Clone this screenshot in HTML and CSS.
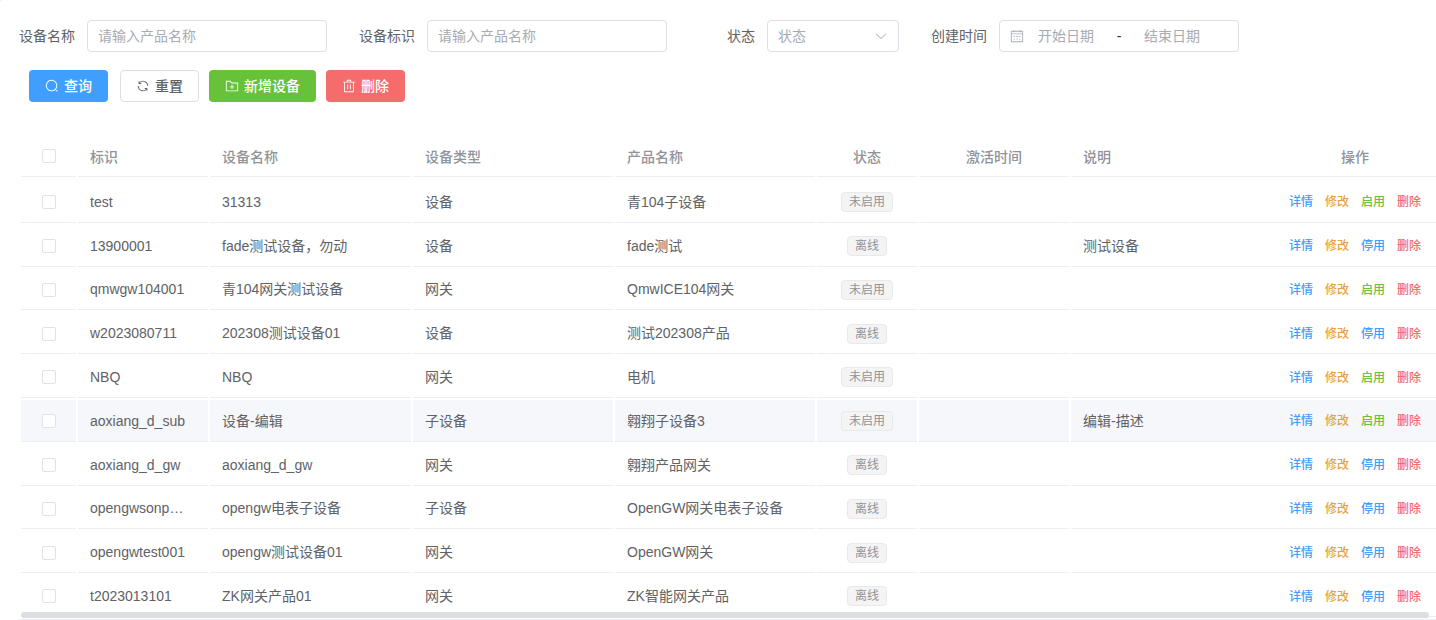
FILE: index.html
```html
<!DOCTYPE html>
<html lang="zh-CN">
<head>
<meta charset="utf-8">
<title>设备管理</title>
<link rel="stylesheet" href="styles.css">
</head>
<body>
<main class="card">
  <form class="filters">
    <div class="field">
      <label class="field-label" for="name">设备名称</label>
      <input class="text-input" id="name" type="text" placeholder="请输入产品名称">
    </div>
    <div class="field">
      <label class="field-label" for="code">设备标识</label>
      <input class="text-input" id="code" type="text" placeholder="请输入产品名称">
    </div>
    <div class="field">
      <label class="field-label" for="state">状态</label>
      <div class="select-box">
        <select class="select-input" id="state"><option>状态</option></select>
        <svg class="icon select-arrow" viewBox="0 0 1024 1024"><path d="M831.872 340.864 512 652.672 192.128 340.864a30.592 30.592 0 0 0-42.752 0 29.12 29.12 0 0 0 0 41.6L489.664 714.24a32 32 0 0 0 44.672 0l340.288-331.712a29.12 29.12 0 0 0 0-41.728 30.592 30.592 0 0 0-42.752 0z"/></svg>
      </div>
    </div>
    <div class="field">
      <label class="field-label field-label-auto" for="start">创建时间</label>
      <div class="date-range">
        <svg class="icon" viewBox="0 0 1024 1024"><path d="M128 384v512h768V192H768v32a32 32 0 1 1-64 0v-32H320v32a32 32 0 0 1-64 0v-32H128v128h768v64H128zm192-256h384V96a32 32 0 1 1 64 0v32h160a32 32 0 0 1 32 32v768a32 32 0 0 1-32 32H96a32 32 0 0 1-32-32V160a32 32 0 0 1 32-32h160V96a32 32 0 0 1 64 0v32zm-32 384h64a32 32 0 0 1 0 64h-64a32 32 0 0 1 0-64zm0 192h64a32 32 0 1 1 0 64h-64a32 32 0 1 1 0-64zm192-192h64a32 32 0 0 1 0 64h-64a32 32 0 0 1 0-64zm0 192h64a32 32 0 1 1 0 64h-64a32 32 0 1 1 0-64zm192-192h64a32 32 0 1 1 0 64h-64a32 32 0 1 1 0-64zm0 192h64a32 32 0 1 1 0 64h-64a32 32 0 1 1 0-64z"/></svg>
        <input class="date-input" id="start" type="text" placeholder="开始日期">
        <span class="date-separator">-</span>
        <input class="date-input" type="text" placeholder="结束日期" aria-label="结束日期">
      </div>
    </div>
  </form>

  <div class="toolbar">
    <button class="btn btn-primary" type="button"><svg class="icon" viewBox="0 0 1024 1024"><path d="m795.904 750.72 124.992 124.928a32 32 0 0 1-45.248 45.248L750.656 795.904a416 416 0 1 1 45.248-45.248zM480 832a352 352 0 1 0 0-704 352 352 0 0 0 0 704z"/></svg>查询</button>
    <button class="btn btn-plain" type="button"><svg class="icon" viewBox="0 0 1024 1024"><path d="M771.776 794.88A384 384 0 0 1 128 512h64a320 320 0 0 0 555.712 216.448H654.72a32 32 0 1 1 0-64h149.056a32 32 0 0 1 32 32v148.928a32 32 0 1 1-64 0v-50.56zM276.288 295.616h92.992a32 32 0 0 1 0 64H220.16a32 32 0 0 1-32-32V178.56a32 32 0 0 1 64 0v50.56A384 384 0 0 1 896.128 512h-64a320 320 0 0 0-555.776-216.384z"/></svg>重置</button>
    <button class="btn btn-success" type="button"><svg class="icon" viewBox="0 0 1024 1024"><path d="M128 192v640h768V320H485.76L357.504 192H128zm-32-64h287.872l128.384 128H928a32 32 0 0 1 32 32v576a32 32 0 0 1-32 32H96a32 32 0 0 1-32-32V160a32 32 0 0 1 32-32zm384 416V416h64v128h128v64H544v128h-64V608H352v-64h128z"/></svg>新增设备</button>
    <button class="btn btn-danger" type="button"><svg class="icon" viewBox="0 0 1024 1024"><path d="M160 256H96a32 32 0 0 1 0-64h256V95.936a32 32 0 0 1 32-32h256a32 32 0 0 1 32 32V192h256a32 32 0 1 1 0 64h-64v672a32 32 0 0 1-32 32H192a32 32 0 0 1-32-32V256zm448-64v-64H416v64h192zM224 896h576V256H224v640zm192-128a32 32 0 0 1-32-32V416a32 32 0 0 1 64 0v320a32 32 0 0 1-32 32zm192 0a32 32 0 0 1-32-32V416a32 32 0 0 1 64 0v320a32 32 0 0 1-32 32z"/></svg>删除</button>
  </div>

  <div class="table-area">
    <table class="devices">
      <colgroup>
        <col class="col-check"><col class="col-code"><col class="col-name"><col class="col-type"><col class="col-product"><col class="col-state"><col class="col-time"><col><col class="col-actions">
      </colgroup>
      <thead>
        <tr>
          <th class="control-cell"><input class="check" type="checkbox" aria-label="全选"></th>
          <th>标识</th><th>设备名称</th><th>设备类型</th><th>产品名称</th>
          <th class="center">状态</th><th class="center">激活时间</th><th>说明</th><th class="center actions-cell">操作</th>
        </tr>
      </thead>
      <tbody>
        <tr>
          <td class="control-cell"><input class="check" type="checkbox" aria-label="选择 test"></td>
          <td>test</td><td>31313</td><td>设备</td><td>青104子设备</td>
          <td class="control-cell"><span class="tag">未启用</span></td><td></td><td></td>
          <td class="actions-cell"><div class="actions"><button class="link blue">详情</button><button class="link orange">修改</button><button class="link green">启用</button><button class="link red">删除</button></div></td>
        </tr>
        <tr>
          <td class="control-cell"><input class="check" type="checkbox" aria-label="选择 13900001"></td>
          <td>13900001</td><td>fade测试设备，勿动</td><td>设备</td><td>fade测试</td>
          <td class="control-cell"><span class="tag">离线</span></td><td></td><td>测试设备</td>
          <td class="actions-cell"><div class="actions"><button class="link blue">详情</button><button class="link orange">修改</button><button class="link blue">停用</button><button class="link red">删除</button></div></td>
        </tr>
        <tr>
          <td class="control-cell"><input class="check" type="checkbox" aria-label="选择 qmwgw104001"></td>
          <td>qmwgw104001</td><td>青104网关测试设备</td><td>网关</td><td>QmwICE104网关</td>
          <td class="control-cell"><span class="tag">未启用</span></td><td></td><td></td>
          <td class="actions-cell"><div class="actions"><button class="link blue">详情</button><button class="link orange">修改</button><button class="link green">启用</button><button class="link red">删除</button></div></td>
        </tr>
        <tr>
          <td class="control-cell"><input class="check" type="checkbox" aria-label="选择 w2023080711"></td>
          <td>w2023080711</td><td>202308测试设备01</td><td>设备</td><td>测试202308产品</td>
          <td class="control-cell"><span class="tag">离线</span></td><td></td><td></td>
          <td class="actions-cell"><div class="actions"><button class="link blue">详情</button><button class="link orange">修改</button><button class="link blue">停用</button><button class="link red">删除</button></div></td>
        </tr>
        <tr>
          <td class="control-cell"><input class="check" type="checkbox" aria-label="选择 NBQ"></td>
          <td>NBQ</td><td>NBQ</td><td>网关</td><td>电机</td>
          <td class="control-cell"><span class="tag">未启用</span></td><td></td><td></td>
          <td class="actions-cell"><div class="actions"><button class="link blue">详情</button><button class="link orange">修改</button><button class="link green">启用</button><button class="link red">删除</button></div></td>
        </tr>
        <tr class="is-active">
          <td class="control-cell"><input class="check" type="checkbox" aria-label="选择 aoxiang_d_sub"></td>
          <td>aoxiang_d_sub</td><td>设备-编辑</td><td>子设备</td><td>翱翔子设备3</td>
          <td class="control-cell"><span class="tag">未启用</span></td><td></td><td>编辑-描述</td>
          <td class="actions-cell"><div class="actions"><button class="link blue">详情</button><button class="link orange">修改</button><button class="link green">启用</button><button class="link red">删除</button></div></td>
        </tr>
        <tr>
          <td class="control-cell"><input class="check" type="checkbox" aria-label="选择 aoxiang_d_gw"></td>
          <td>aoxiang_d_gw</td><td>aoxiang_d_gw</td><td>网关</td><td>翱翔产品网关</td>
          <td class="control-cell"><span class="tag">离线</span></td><td></td><td></td>
          <td class="actions-cell"><div class="actions"><button class="link blue">详情</button><button class="link orange">修改</button><button class="link blue">停用</button><button class="link red">删除</button></div></td>
        </tr>
        <tr>
          <td class="control-cell"><input class="check" type="checkbox" aria-label="选择 opengwsonp…"></td>
          <td>opengwsonp…</td><td>opengw电表子设备</td><td>子设备</td><td>OpenGW网关电表子设备</td>
          <td class="control-cell"><span class="tag">离线</span></td><td></td><td></td>
          <td class="actions-cell"><div class="actions"><button class="link blue">详情</button><button class="link orange">修改</button><button class="link blue">停用</button><button class="link red">删除</button></div></td>
        </tr>
        <tr>
          <td class="control-cell"><input class="check" type="checkbox" aria-label="选择 opengwtest001"></td>
          <td>opengwtest001</td><td>opengw测试设备01</td><td>网关</td><td>OpenGW网关</td>
          <td class="control-cell"><span class="tag">离线</span></td><td></td><td></td>
          <td class="actions-cell"><div class="actions"><button class="link blue">详情</button><button class="link orange">修改</button><button class="link blue">停用</button><button class="link red">删除</button></div></td>
        </tr>
        <tr>
          <td class="control-cell"><input class="check" type="checkbox" aria-label="选择 t2023013101"></td>
          <td>t2023013101</td><td>ZK网关产品01</td><td>网关</td><td>ZK智能网关产品</td>
          <td class="control-cell"><span class="tag">离线</span></td><td></td><td></td>
          <td class="actions-cell"><div class="actions"><button class="link blue">详情</button><button class="link orange">修改</button><button class="link blue">停用</button><button class="link red">删除</button></div></td>
        </tr>
      </tbody>
    </table>
    <div class="scroll-thumb"></div>
  </div>
</main>
</body>
</html>
```
FILE: styles.css
```css
* { box-sizing: border-box; }

body {
  margin: 0;
  background: #f0f0f0;
  color: #606266;
  font-family: "Liberation Sans", "Noto Sans CJK SC", sans-serif;
  font-size: 14px;
}

button, input, select { font: inherit; color: inherit; margin: 0; }

.card {
  display: flex;
  flex-direction: column;
  height: 100vh;
  padding: 20px 0 0 19px;
  background: #fff;
  border-top-left-radius: 4px;
}

.icon { width: 14px; height: 14px; flex: none; fill: currentColor; }

/* Filters */
.filters { display: flex; flex-wrap: wrap; gap: 18px 32px; }
.field { display: flex; height: 32px; align-items: center; }
.field-label { width: 68px; padding: 0 12px 2px 0; text-align: right; white-space: nowrap; }
.field-label-auto { width: auto; }

.text-input, .select-input, .date-range {
  height: 32px;
  border: 1px solid #dcdfe6;
  border-radius: 4px;
  background: #fff;
}
.text-input { width: 240px; padding: 0 10px; }
.text-input::placeholder, .date-input::placeholder { color: #a8abb2; opacity: 1; }

.select-box { position: relative; width: 132px; }
.select-input { appearance: none; width: 100%; padding: 0 30px 0 10px; color: #a8abb2; }
.select-arrow { position: absolute; right: 11px; top: 9px; color: #a8abb2; pointer-events: none; }

.date-range { display: flex; align-items: center; width: 240px; padding: 0 10px; color: #a8abb2; }
.date-input { width: 84px; padding: 0; border: 0; background: none; text-align: center; color: #606266; }
.date-separator { width: 22px; text-align: center; color: #303133; }

/* Toolbar */
.toolbar { display: flex; gap: 10px; padding: 18px 10px 31px; }
.btn {
  display: inline-flex;
  align-items: center;
  gap: 5px;
  height: 32px;
  padding: 0 15px 2px;
  border: 1px solid transparent;
  border-radius: 4px;
  color: #fff;
  font-weight: 500;
  white-space: nowrap;
}
.btn .icon { margin-top: 2px; }
.btn-primary { background: #409eff; margin-right: 2px; }
.btn-plain { background: #fff; border-color: #dcdfe6; color: #606266; }
.btn-success { background: #67c23a; }
.btn-danger { background: #f56c6c; }

/* Table */
.table-area {
  position: relative;
  flex: 1;
  overflow: hidden;
  border-bottom: 1px solid #ebeef5;
}
.devices {
  width: calc(100% + 2px);
  height: 100%;
  table-layout: fixed;
  border-collapse: separate;
  border-spacing: 2px;
}
.col-check { width: 55px; }
.col-code { width: 130px; }
.col-name { width: 201px; }
.col-type, .col-product { width: 200px; }
.col-state { width: 100px; }
.col-time { width: 150px; }
.col-actions { width: 162px; }

/* Extra spacing between the header and the first row */
.devices tbody::before { content: ""; display: table-row; }

.devices th, .devices td {
  padding: 9px 12px 7px;
  border-bottom: 1px solid #ebeef5;
  line-height: 23px;
  text-align: left;
  white-space: nowrap;
  overflow: hidden;
  text-overflow: ellipsis;
}
.devices th { height: 42px; padding: 10px 12px 6px; color: #909399; font-weight: 500; }
.devices .center { text-align: center; }
.devices .control-cell { padding: 8px 12px; text-align: center; }
.is-active td { background: #f5f7fa; }

/* The actions column joins its neighbour without a gap */
.devices .actions-cell { position: relative; overflow: visible; }
.actions-cell::before {
  content: "";
  position: absolute;
  left: -2px;
  top: 0;
  bottom: -1px;
  width: 2px;
  background: inherit;
  border-bottom: 1px solid #ebeef5;
}

.check {
  appearance: none;
  display: inline-block;
  width: 14px;
  height: 14px;
  border: 1px solid #dfe2e9;
  border-radius: 2px;
  background: #fff;
  vertical-align: middle;
}
.check:checked { background: #409eff; border-color: #409eff; }

.tag {
  display: inline-block;
  height: 20px;
  padding: 0 7px;
  border: 1px solid #e9e9eb;
  border-radius: 4px;
  background: #f4f4f5;
  color: #909399;
  font-size: 12px;
  line-height: 19px;
  vertical-align: middle;
}

.actions { display: flex; justify-content: center; gap: 12px; }
.link { padding: 1px 0 0; border: 0; background: none; font-size: 12px; font-weight: 500; }
.blue { color: #409eff; }
.orange { color: #e6a23c; }
.green { color: #67c23a; }
.red { color: #f56c6c; }

.scroll-thumb {
  position: absolute;
  left: 2px;
  right: 7px;
  bottom: 1px;
  height: 6px;
  border-radius: 3px;
  background: #dddedf;
}
```
